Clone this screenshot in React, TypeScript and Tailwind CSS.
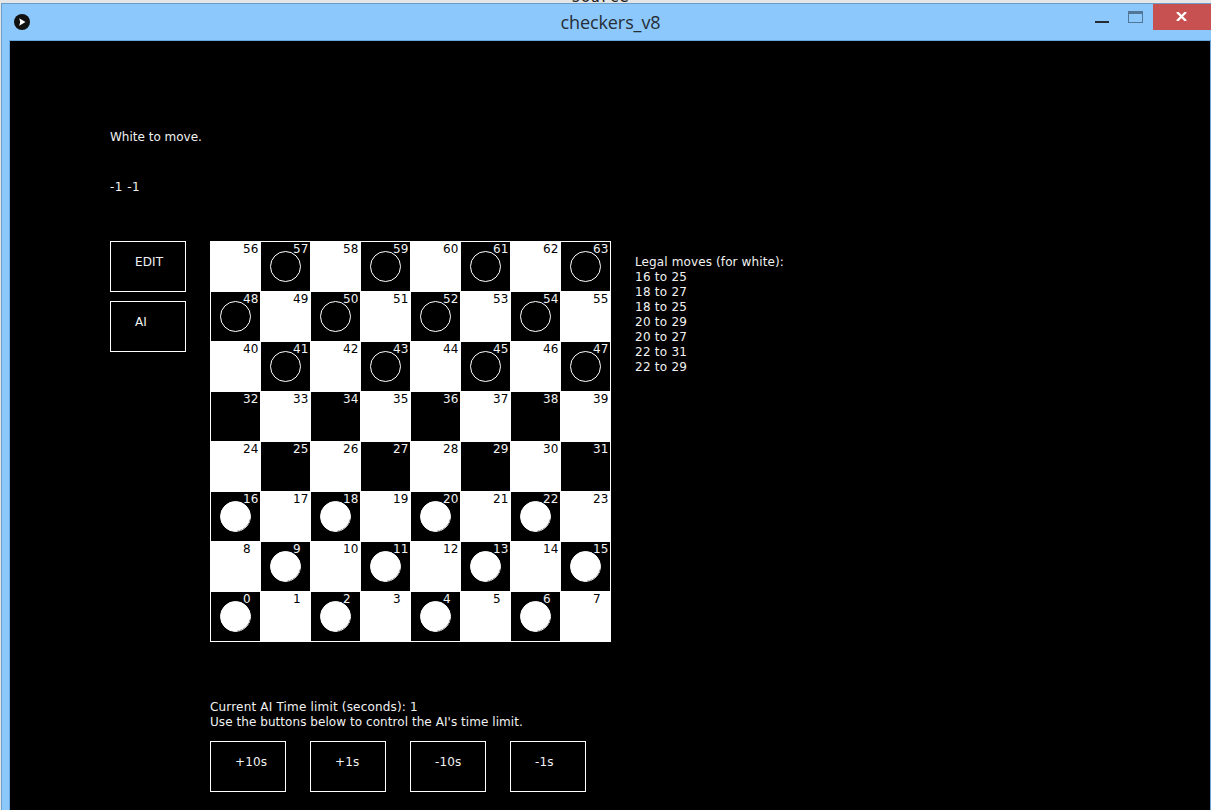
import React from "react";

const LEGAL_MOVES = ["16 to 25", "18 to 27", "18 to 25", "20 to 29", "20 to 27", "22 to 31", "22 to 29"];
const TIME_BUTTONS = ["+10s", "+1s", "-10s", "-1s"];
const ROWS = [7, 6, 5, 4, 3, 2, 1, 0];
const COLS = [0, 1, 2, 3, 4, 5, 6, 7];

function Piece({ filled }: { filled: boolean }) {
  return (
    <svg className="absolute left-[9px] top-[9px] size-[31px]" viewBox="0 0 31 31">
      <circle cx="15.5" cy="15.5" r="15" fill={filled ? "#fff" : "#000"} stroke="#fff" strokeWidth="1" />
      {filled && <path d="M30 18.5A14.8 14.8 0 0 1 17.5 30" fill="none" stroke="#444" strokeWidth="0.7" strokeDasharray="2.5 0.8" />}
    </svg>
  );
}

function Square({ row, col }: { row: number; col: number }) {
  const dark = (row + col) % 2 === 0;
  const occupied = dark && (row < 3 || row > 4);
  return (
    <div className={`relative size-[49px] ${dark ? "bg-black text-[#f2f2f2]" : "bg-white text-black"}`}>
      {occupied && <Piece filled={row < 3} />}
      <span className="absolute left-[32px] top-0 leading-[15px] tracking-[0.2px]">{row * 8 + col}</span>
    </div>
  );
}

function BoxButton({ label }: { label: string }) {
  return (
    <button className="flex h-[51px] w-[76px] items-start border border-white pl-6 pt-[13px] text-left leading-[15px] tracking-[0.15px]">
      {label}
    </button>
  );
}

function TitleBar() {
  return (
    <header className="flex h-[36px] shrink-0 items-start">
      <div className="w-[200px] pl-3 pt-[10px]">
        <svg className="size-4" viewBox="0 0 16 16">
          <circle cx="8" cy="8" r="8" fill="#111" />
          <path d="M5.2 4.2L11.5 8L5.2 11.8L6.2 8Z" fill="#fff" />
        </svg>
      </div>
      <h1 className="flex-1 pt-[5px] text-center font-['Open_Sans','Noto_Sans',sans-serif] text-[18px] leading-[26px] tracking-[-0.1px] text-[#262d35]">
        <span className="inline-block">checkers_v8</span>
      </h1>
      <div className="flex w-[192px] justify-end">
        <div className="flex gap-[19px] pr-[10px]">
          <span className="mt-[17px] h-[2px] w-[14px] bg-[#252b31]" />
          <span className="mt-[7px] h-3 w-[15px] border border-t-[3px] border-[#527796]" />
        </div>
        <div className="flex h-[26px] w-[58px] items-center justify-center bg-[#c75050]">
          <svg className="mb-px mr-px h-[9px] w-[11px]" viewBox="0 0 11 9">
            <path d="M1 0L10 9M10 0L1 9" stroke="#fff" strokeWidth="2.3" />
          </svg>
        </div>
      </div>
    </header>
  );
}

export default function App() {
  return (
    <div className="flex h-[810px] w-[1211px] flex-col overflow-hidden bg-[#e6e6e6]">
      <div className="h-[3px] shrink-0 overflow-hidden pl-[571px] font-['DejaVu_Sans_Mono',monospace] text-[16px] text-[#222]">
        <div className="-mt-[13px] leading-5">source</div>
      </div>
      <div className="ml-px flex min-h-0 flex-1 flex-col border-l border-t border-[#6a9dca] bg-[#8cc8fc]">
        <TitleBar />
        <main className="ml-[7px] flex min-h-0 flex-1 flex-col border-x border-t border-[#6aa5dc] bg-black pl-[100px] font-['DejaVu_Sans',sans-serif] text-[12px] text-[#f2f2f2]">
          <p className="mt-[89px] h-[50px] leading-[15px]">White to move.</p>
          <p className="leading-[15px] tracking-[0.5px]">-1 -1</p>
          <div className="mt-[46px] flex">
            <aside className="flex w-[100px] flex-col gap-[9px]">
              <BoxButton label="EDIT" />
              <BoxButton label="AI" />
            </aside>
            <div className="grid grid-cols-[repeat(8,49px)] gap-px border border-white bg-white">
              {ROWS.map((row) => COLS.map((col) => <Square key={row * 8 + col} row={row} col={col} />))}
            </div>
            <section className="pl-6 pt-[14px] leading-[15px]">
              <p className="tracking-[0.12px]">Legal moves (for white):</p>
              {LEGAL_MOVES.map((move) => <p key={move} className="tracking-[0.25px]">{move}</p>)}
            </section>
          </div>
          <section className="mt-[58px] pl-[100px] leading-[15px]">
            <p className="tracking-[0.18px]">Current AI Time limit (seconds): 1</p>
            <p className="tracking-[0.06px]">Use the buttons below to control the AI's time limit.</p>
            <div className="mt-[11px] flex gap-6">
              {TIME_BUTTONS.map((label) => <BoxButton key={label} label={label} />)}
            </div>
          </section>
        </main>
      </div>
    </div>
  );
}
